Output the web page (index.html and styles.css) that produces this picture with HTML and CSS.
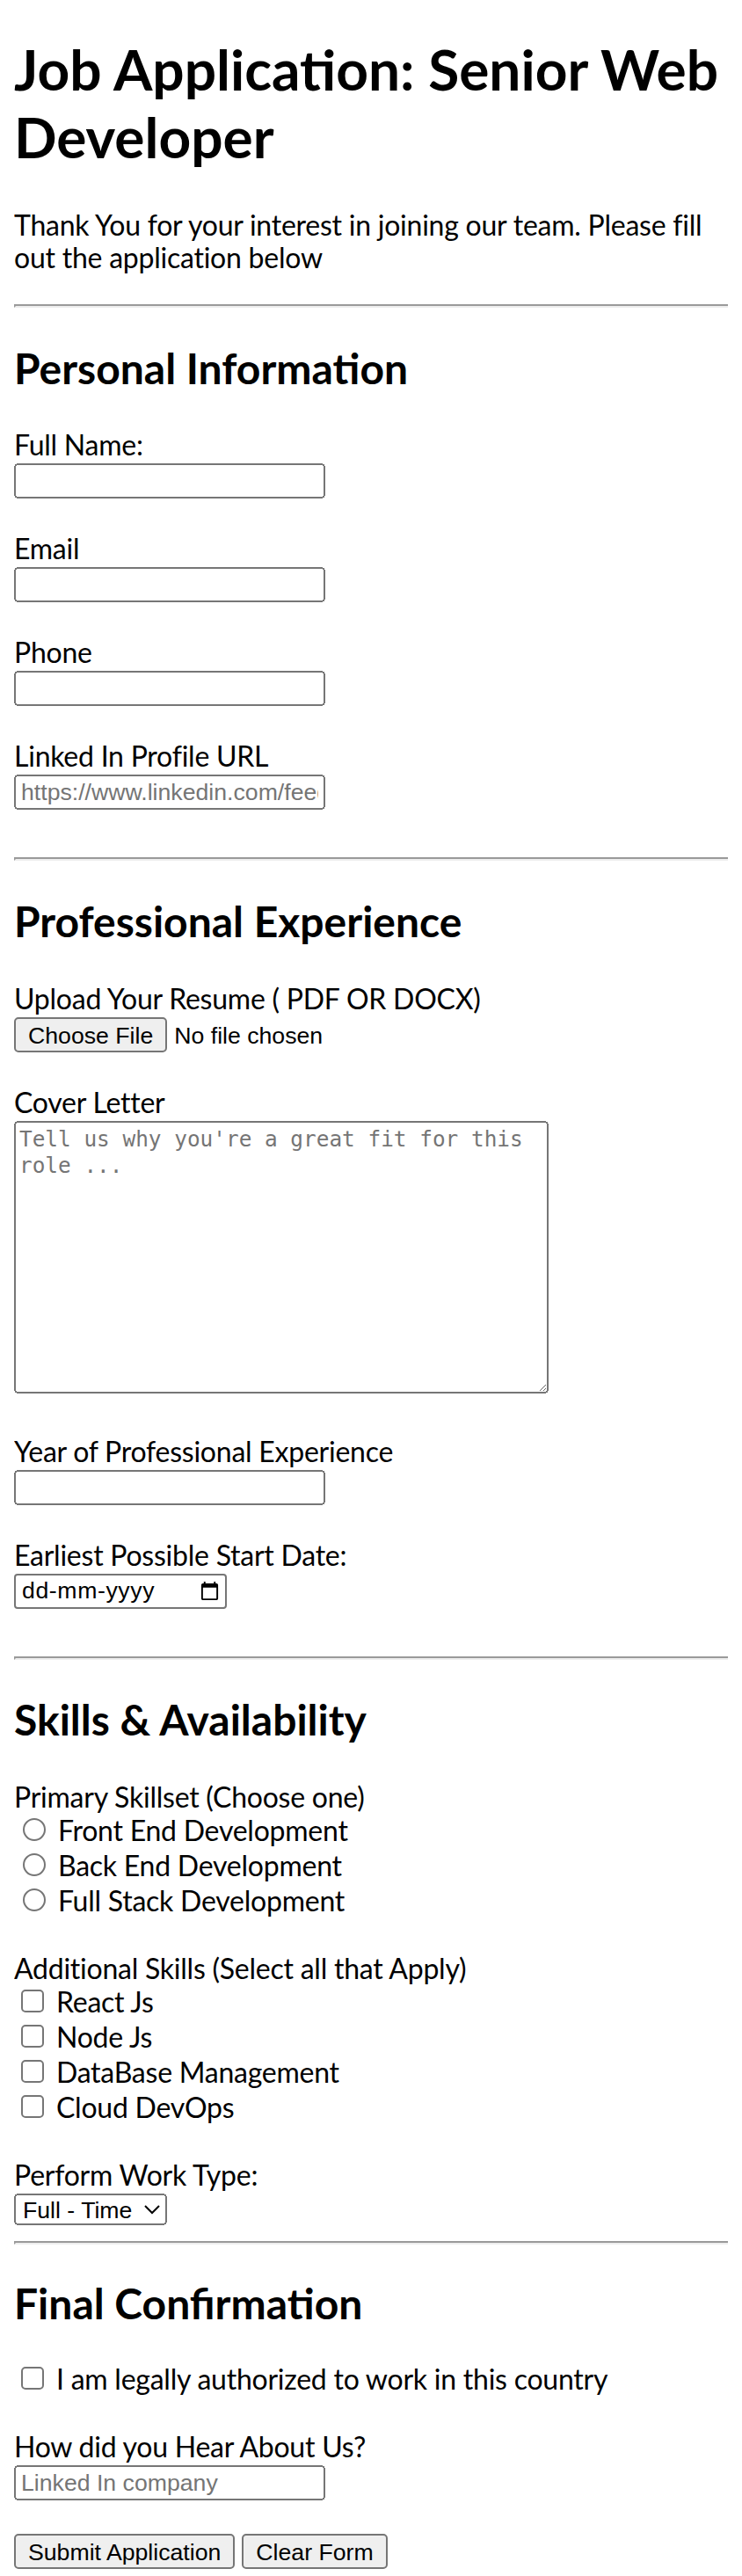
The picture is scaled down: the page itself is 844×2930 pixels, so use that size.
FILE: index.html
```html
<!DOCTYPE html>
<html lang="en">
<head>
<meta charset="utf-8">
<title>Job Application: Senior Web Developer</title>
<link rel="stylesheet" href="styles.css">
</head>
<body>
<h1 class="title">Job Application: Senior Web Developer</h1>
<p class="intro">Thank You for your interest in joining our team. Please fill out the application below</p>
<form class="app-form">
  <hr class="rule">
  <section class="sec">
    <h2 class="sec-title">Personal Information</h2>
    <div class="field">
      <label class="lbl" for="fullname">Full Name:</label>
      <input class="txt" type="text" id="fullname">
    </div>
    <div class="field">
      <label class="lbl" for="email">Email</label>
      <input class="txt" type="email" id="email">
    </div>
    <div class="field">
      <label class="lbl" for="phone">Phone</label>
      <input class="txt" type="tel" id="phone">
    </div>
    <div class="field">
      <label class="lbl" for="linkedin">Linked In Profile URL</label>
      <input class="txt" type="url" id="linkedin" placeholder="https://www.linkedin.com/feed">
    </div>
  </section>
  <hr class="rule">
  <section class="sec">
    <h2 class="sec-title">Professional Experience</h2>
    <div class="field">
      <label class="lbl" for="resume">Upload Your Resume ( PDF OR DOCX)</label>
      <input class="file" type="file" id="resume" accept=".pdf,.docx">
    </div>
    <div class="field field-tall">
      <label class="lbl" for="cover">Cover Letter</label>
      <textarea class="area" id="cover" rows="10" cols="40" placeholder="Tell us why you're a great fit for this role ..."></textarea>
    </div>
    <div class="field">
      <label class="lbl" for="years">Year of Professional Experience</label>
      <input class="txt" type="number" id="years">
    </div>
    <div class="field">
      <label class="lbl" for="start">Earliest Possible Start Date:</label>
      <span class="date-box">
        <input class="date-input" type="text" id="start" placeholder="dd-mm-yyyy">
        <svg class="cal" viewBox="0 0 24 24" aria-hidden="true"><path d="M20 3h-1V1h-2v2H7V1H5v2H4c-1.1 0-2 .9-2 2v16c0 1.1.9 2 2 2h16c1.1 0 2-.9 2-2V5c0-1.1-.9-2-2-2zm0 18H4V8h16v13z"/></svg>
      </span>
    </div>
  </section>
  <hr class="rule">
  <section class="sec">
    <h2 class="sec-title">Skills &amp; Availability</h2>
    <div class="field">
      <div class="group-lbl">Primary Skillset (Choose one)</div>
      <div class="opt"><input type="radio" name="primary" id="fe"> <label for="fe">Front End Development</label></div>
      <div class="opt"><input type="radio" name="primary" id="be"> <label for="be">Back End Development</label></div>
      <div class="opt"><input type="radio" name="primary" id="fs"> <label for="fs">Full Stack Development</label></div>
    </div>
    <div class="field">
      <div class="group-lbl">Additional Skills (Select all that Apply)</div>
      <div class="opt"><input type="checkbox" id="react"> <label for="react">React Js</label></div>
      <div class="opt"><input type="checkbox" id="node"> <label for="node">Node Js</label></div>
      <div class="opt"><input type="checkbox" id="db"> <label for="db">DataBase Management</label></div>
      <div class="opt"><input type="checkbox" id="cloud"> <label for="cloud">Cloud DevOps</label></div>
    </div>
    <div class="field field-end">
      <label class="lbl" for="worktype">Perform Work Type:</label>
      <select class="sel" id="worktype">
        <option>Full - Time</option>
        <option>Part - Time</option>
        <option>Contract</option>
      </select>
    </div>
  </section>
  <hr class="rule">
  <section class="sec">
    <h2 class="sec-title sec-title-tight">Final Confirmation</h2>
    <div class="field">
      <div class="opt"><input type="checkbox" id="legal"> <label for="legal">I am legally authorized to work in this country</label></div>
    </div>
    <div class="field">
      <label class="lbl" for="source">How did you Hear About Us?</label>
      <input class="txt" type="text" id="source" placeholder="Linked In company">
    </div>
    <div class="actions">
      <button class="btn" type="submit">Submit Application</button>
      <button class="btn" type="reset">Clear Form</button>
    </div>
  </section>
</form>
</body>
</html>
```

FILE: styles.css
```css
html {
  zoom: 2;
}

body {
  margin: 8px;
  font-family: Lato, "Noto Sans", sans-serif;
  font-size: 16px;
  letter-spacing: -0.12px;
  color: #000;
  background: #fff;
}

.title {
  font-size: 32px;
  font-weight: 700;
  line-height: 38.5px;
  letter-spacing: 0;
  margin: 12px 0 21.5px;
}

.intro {
  line-height: 18.5px;
  margin: 0 0 17.5px;
}

.rule {
  box-sizing: border-box;
  width: calc(100% + 8px);
  margin: 8px 0;
}

.sec-title {
  font-size: 24px;
  font-weight: 700;
  line-height: 1.2;
  letter-spacing: 0;
  margin: 19.92px 0;
}

.sec-title-tight {
  margin-top: 19px;
  margin-bottom: 19px;
}

.field {
  padding-bottom: 19px;
}

.field-tall {
  padding-bottom: 23.5px;
}

.field-end {
  padding-bottom: 1px;
}

.lbl {
  display: block;
  line-height: 18.5px;
  margin-bottom: 1.5px;
}

.group-lbl {
  line-height: 18.5px;
}

.opt {
  line-height: 20px;
}

.txt {
  display: block;
  box-sizing: border-box;
  width: 177px;
  height: 20px;
  margin: 0;
  letter-spacing: 0;
  font: 13.33px "Liberation Sans", Arial, sans-serif;
}

.file {
  display: block;
  height: 20px;
  letter-spacing: 0;
  font: 13.33px "Liberation Sans", Arial, sans-serif;
}

.file::file-selector-button {
  height: 20px;
}

.area {
  display: block;
  box-sizing: border-box;
  width: 304px;
  height: 155px;
  margin: 0;
  padding: 2px;
  letter-spacing: 0;
  font: 12.2px/15px "DejaVu Sans Mono", monospace;
}

.date-box {
  display: flex;
  align-items: center;
  box-sizing: border-box;
  width: 121px;
  height: 20px;
  padding: 0 2.8px 0 3.5px;
  border: 1px solid #767676;
  border-radius: 2px;
  background: #fff;
}

.date-input {
  flex: 1;
  min-width: 0;
  border: none;
  padding: 0;
  margin: 0;
  outline: none;
  background: transparent;
  letter-spacing: 0.3px;
  font: 13.33px "Liberation Sans", Arial, sans-serif;
  color: #000;
}

.date-input::placeholder {
  color: #000;
}

.cal {
  width: 11.5px;
  height: 11.5px;
  flex: none;
  fill: #000;
}

.sel {
  display: block;
  width: 87px;
  height: 18px;
  margin-top: 1.5px;
  letter-spacing: 0;
  font: 13.33px "Liberation Sans", Arial, sans-serif;
}

.actions {
  display: flex;
  gap: 4px;
}

.btn {
  height: 20px;
  margin: 0;
  letter-spacing: 0;
  font: 13.33px "Liberation Sans", Arial, sans-serif;
}
```
